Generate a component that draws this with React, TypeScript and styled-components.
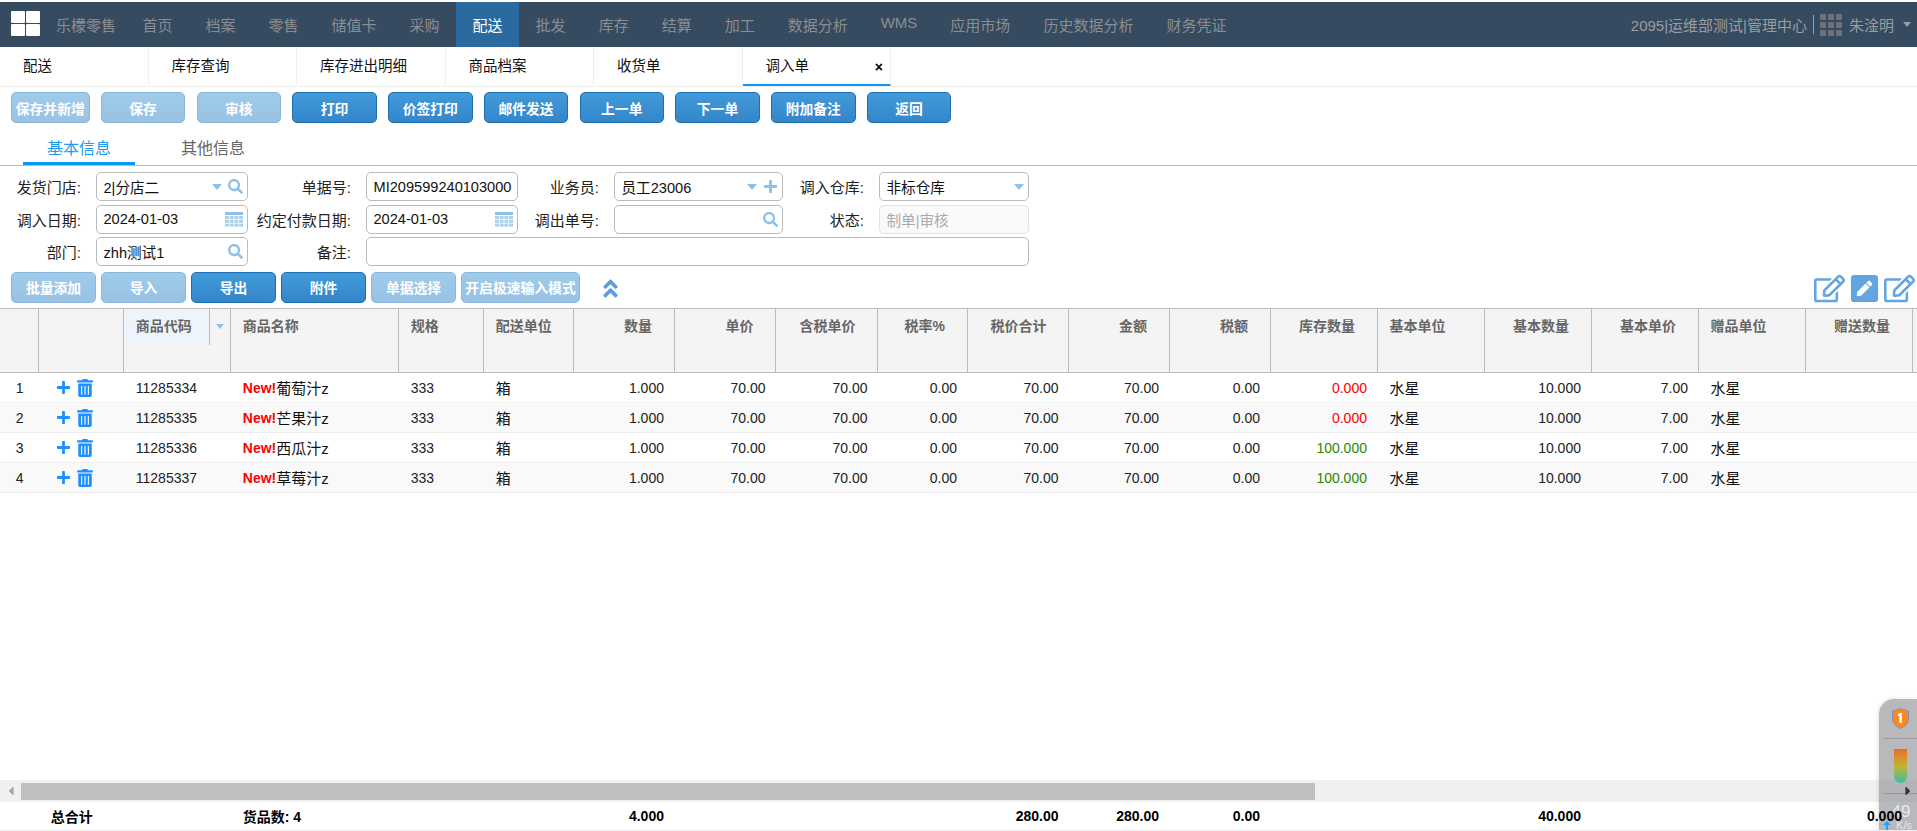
import React from 'react';
import styled, { createGlobalStyle } from 'styled-components';
import { FaSearch, FaPlus, FaTrashAlt, FaRegEdit, FaPenSquare, FaAngleDoubleUp, FaCaretLeft, FaCaretRight } from 'react-icons/fa';

const Global = createGlobalStyle`
  html, body { margin: 0; padding: 0; background: #fff; overflow: hidden; }
  body { font-family: "Liberation Sans", "Noto Sans CJK SC", sans-serif; font-size: 14px; color: #222; }
`;

const COLUMNS = '39.3px 85px 107px 168px 85px 90.2px 100.5px 101.5px 102px 89.5px 101.5px 100.5px 101px 107px 107px 107px 107px 107px 107px 60px';

const Page = styled.div`
  position: relative;
  height: 831px;
  width: 1917px;
  overflow: hidden;
  display: flex;
  flex-direction: column;
`;

const TopNav = styled.nav`
  margin-top: 2px;
  height: 45px;
  flex: none;
  background: #364a60;
  display: flex;
  align-items: stretch;
  color: #8b8e91;
  font-size: 15px;
`;
const Logo = styled.div`
  margin: 9px 16px 0 11px;
  width: 29px;
  height: 25px;
  display: grid;
  grid-template-columns: 1fr 1fr;
  grid-template-rows: 1fr 1fr;
  gap: 1px;
  span { background: #fff; border-radius: 1px; }
`;
const Brand = styled.div`
  display: flex;
  align-items: center;
  margin-right: 10px;
  white-space: nowrap;
`;
const NavItem = styled.div<{ $active?: boolean; $raised?: boolean }>`
  display: flex;
  align-items: center;
  padding: 0 16.5px ${p => (p.$raised ? '4px' : '0')};
  white-space: nowrap;
  background: ${p => (p.$active ? '#2a6a9e' : 'transparent')};
  color: ${p => (p.$active ? '#fff' : 'inherit')};
`;
const NavRight = styled.div`
  margin-left: auto;
  display: flex;
  align-items: center;
  font-size: 15px;
  color: #9a9da0;
  white-space: nowrap;
  padding-right: 6px;
`;
const Divider = styled.span`
  width: 1px;
  height: 19px;
  background: #9a9da0;
  margin: 0 6px;
`;
const UserName = styled.span`
  margin: 0 9px 0 7px;
`;
const Caret = styled.span<{ $color?: string; $w?: number }>`
  flex: none;
  width: 0;
  height: 0;
  border-left: ${p => (p.$w ?? 10) / 2}px solid transparent;
  border-right: ${p => (p.$w ?? 10) / 2}px solid transparent;
  border-top: ${p => (p.$w ?? 10) * 0.65}px solid ${p => p.$color ?? '#8fc0e8'};
`;

const TabBar = styled.div`
  height: 39px;
  flex: none;
  display: flex;
  border-bottom: 1px solid #eee;
`;
const Tab = styled.div<{ $active?: boolean }>`
  width: 148.5px;
  box-sizing: border-box;
  display: flex;
  align-items: center;
  justify-content: space-between;
  padding: 0 7px 2px 23px;
  font-size: 14.5px;
  color: #111;
  border-right: 1px solid #eee;
  border-bottom: 2px solid ${p => (p.$active ? '#0a97f5' : 'transparent')};
`;
const Close = styled.span`
  font-weight: bold;
  font-size: 14px;
  color: #000;
  margin-top: 5px;
`;

const Toolbar = styled.div<{ $gap: number; $top: number }>`
  flex: none;
  display: flex;
  align-items: center;
  gap: ${p => p.$gap}px;
  padding: ${p => p.$top}px 2px 0 11px;
`;
const Btn = styled.button<{ $w?: number; $off?: boolean }>`
  flex: none;
  box-sizing: border-box;
  width: ${p => p.$w ?? 84.5}px;
  height: 31px;
  padding: 0;
  border: 1px solid #1b6fae;
  border-radius: 5px;
  background: linear-gradient(#409ad9, #3586ca);
  color: #fff;
  font: bold 13.8px "Liberation Sans", "Noto Sans CJK SC", sans-serif;
  white-space: nowrap;
  opacity: ${p => (p.$off ? 0.5 : 1)};
`;

const SubTabs = styled.div`
  flex: none;
  height: 42px;
  display: flex;
  gap: 22px;
  padding-left: 23px;
  border-bottom: 1px solid #bbb;
`;
const SubTab = styled.div<{ $active?: boolean }>`
  width: 112px;
  box-sizing: border-box;
  display: flex;
  justify-content: center;
  align-items: center;
  padding-top: 8px;
  font-size: 16px;
  color: ${p => (p.$active ? '#1f9bf0' : '#666')};
  border-bottom: 3px solid ${p => (p.$active ? '#0a97f5' : 'transparent')};
`;

const Form = styled.div`
  flex: none;
  margin-top: 6px;
  display: grid;
  grid-template-columns: 81px 152.5px 88.5px 152px 67px 169px 67px 150px;
  grid-auto-rows: 29px;
  column-gap: 14.5px;
  row-gap: 3.5px;
  font-size: 15px;
`;
const Label = styled.label`
  display: flex;
  justify-content: flex-end;
  align-items: center;
  white-space: nowrap;
  color: #222;
`;
const Field = styled.div<{ $disabled?: boolean; $span?: boolean }>`
  box-sizing: border-box;
  display: flex;
  align-items: center;
  gap: 6px;
  padding: 0 4px 0 7px;
  border: 1px solid ${p => (p.$disabled ? '#e2e2e2' : '#bbb')};
  border-radius: 5px;
  overflow: hidden;
  white-space: nowrap;
  font-size: 14.6px;
  background: ${p => (p.$disabled ? '#fafafa' : '#fff')};
  color: ${p => (p.$disabled ? '#aaa' : '#111')};
  grid-column: ${p => (p.$span ? '4 / -1' : 'auto')};
`;
const FieldValue = styled.span`
  flex: 1;
  min-width: 0;
  overflow: hidden;
`;
const Tint = styled.span`
  display: flex;
  color: #8fc0e8;
  font-size: 15px;
`;

const Chevrons = styled.span`
  display: flex;
  margin: 2px 0 0 14px;
  color: #5b9ddf;
  font-size: 23px;
`;
const EditIcons = styled.div`
  margin: 2px 0 0 auto;
  display: flex;
  align-items: center;
  gap: 4px;
  color: #62a5e2;
  font-size: 31px;
`;

const Table = styled.div`
  flex: 1;
  min-height: 0;
  margin-top: 4.5px;
  display: flex;
  flex-direction: column;
  overflow: hidden;
`;
const Grid = styled.div`
  display: grid;
  grid-template-columns: ${COLUMNS};
  width: max-content;
`;
const HeadRow = styled(Grid)`
  flex: none;
  height: 65px;
  box-sizing: border-box;
  background: #f4f4f4;
  border-top: 1px solid #bbb;
  border-bottom: 1px solid #bbb;
`;
const HeadCell = styled.div<{ $right?: boolean }>`
  box-sizing: border-box;
  border-right: 1px solid #bbb;
  padding: 7px ${p => (p.$right ? '22px' : '0')} 0 ${p => (p.$right ? '0' : '11.5px')};
  text-align: ${p => (p.$right ? 'right' : 'left')};
  font-weight: bold;
  color: #666;
  line-height: 20px;
  white-space: nowrap;
`;
const SortCell = styled.div`
  border-right: 1px solid #bbb;
  display: flex;
  align-items: flex-start;
`;
const SortLabel = styled.div`
  box-sizing: border-box;
  width: 86px;
  height: 36px;
  flex: none;
  padding: 7px 0 0 11.5px;
  line-height: 20px;
  background: #eef4fb;
  border-right: 1px solid #bbb;
  font-weight: bold;
  color: #666;
  white-space: nowrap;
`;
const SortCaret = styled.span`
  margin: 15px 0 0 6px;
  display: flex;
`;
const Body = styled.div`
  flex: 1;
  min-height: 0;
`;
const DataRow = styled(Grid)<{ $alt: boolean }>`
  height: 30px;
  box-sizing: border-box;
  background: ${p => (p.$alt ? '#f9f9f9' : '#fff')};
  border-bottom: 1px solid #eee;
`;
const Cell = styled.div<{ $align?: string; $color?: string }>`
  display: flex;
  align-items: center;
  justify-content: ${p => (p.$align === 'right' ? 'flex-end' : p.$align === 'center' ? 'center' : 'flex-start')};
  padding: ${p => (p.$align === 'right' ? '0 11px 0 0' : p.$align === 'center' ? '0' : '0 0 0 11.5px')};
  color: ${p => p.$color ?? '#222'};
  white-space: nowrap;
`;
const Han = styled.span`
  font-size: 15px;
  color: #111;
  margin-top: -1px;
`;
const NewTag = styled.b`
  color: #f00;
`;
const Actions = styled.div`
  display: flex;
  align-items: center;
  gap: 5px;
  padding-left: 16.5px;
  color: #1e8fff;
  font-size: 15px;
  svg:last-child { font-size: 18px; }
`;

const ScrollBar = styled.div`
  flex: none;
  height: 22px;
  background: #f0f0f0;
  display: flex;
  align-items: center;
  color: #a5a5a5;
  font-size: 14px;
`;
const ScrollLeft = styled.span`
  width: 21px;
  flex: none;
  display: flex;
  justify-content: center;
`;
const Thumb = styled.div`
  width: 1294px;
  height: 17px;
  background: #c0c0c0;
`;
const ScrollRight = styled.span`
  margin-left: auto;
  margin-right: 2px;
  display: flex;
  color: #333;
  position: relative;
  z-index: 3;
`;
const Totals = styled(Grid)`
  flex: none;
  height: 29px;
  box-sizing: border-box;
  border-bottom: 1px solid #eee;
  font-weight: bold;
  position: relative;
  z-index: 3;
`;
const TotalCell = styled(Cell)`
  color: #000;
`;

const Widget = styled.div`
  position: absolute;
  right: 0;
  bottom: 0;
  width: 38px;
  height: 132px;
  box-sizing: border-box;
  border-top-left-radius: 15px;
  background: rgba(150, 152, 158, 0.68);
  box-shadow: -1px 0 4px rgba(0, 0, 0, 0.12);
  z-index: 2;
  display: flex;
  flex-direction: column;
  align-items: center;
`;
const WidgetPart = styled.div<{ $h: number }>`
  height: ${p => p.$h}px;
  flex: none;
  width: 34px;
  margin-left: 4px;
  display: flex;
  align-items: center;
  justify-content: center;
  border-bottom: 1px solid rgba(120, 120, 125, 0.45);
  box-sizing: border-box;
`;
const Speed = styled.div`
  margin-left: 4px;
  width: 34px;
  display: flex;
  flex-direction: column;
  align-items: center;
  color: #e8e8ea;
`;
const SpeedNum = styled.span`
  font-size: 17px;
  line-height: 16px;
  margin-top: 10px;
  padding-left: 2px;
`;
const SpeedUnit = styled.span`
  display: flex;
  align-items: center;
  gap: 5px;
  font-size: 11px;
  line-height: 10px;
  margin-left: -5px;
`;

const CalendarIcon = () => (
  <svg width="18" height="15" viewBox="0 0 18 15">
    <rect width="18" height="3" fill="#8fc0e8" />
    {[0, 1, 2].map(r =>
      [0, 1, 2, 3].map(c => <rect key={`${r}${c}`} x={c * 4.7} y={4 + r * 3.8} width="3.9" height="3" fill="#a9d0ee" />)
    )}
  </svg>
);

const GridIcon = () => (
  <svg width="22" height="22" viewBox="0 0 22 22">
    {[0, 1, 2].map(r =>
      [0, 1, 2].map(c => <rect key={`${r}${c}`} x={c * 8} y={r * 8} width="6" height="6" rx="1" fill="#6f7276" />)
    )}
  </svg>
);

const Shield = () => (
  <svg width="17" height="21" viewBox="0 0 17 21">
    <path d="M8.5 0.5 L16.5 3 V11 C16.5 15.5 12.5 18.5 8.5 20.5 C4.5 18.5 0.5 15.5 0.5 11 V3 Z" fill="#f78a1d" stroke="#8c8cc0" />
    <path d="M9.8 5 H7.6 L5.8 6.6 V8.6 L7.4 7.7 V15 H9.8 Z" fill="#fff" />
  </svg>
);

const Tube = () => (
  <svg width="13" height="34" viewBox="0 0 13 34">
    <defs>
      <linearGradient id="tube" x1="0" y1="0" x2="0" y2="1">
        <stop offset="0" stopColor="#ee6a2c" />
        <stop offset="0.5" stopColor="#c2b431" />
        <stop offset="1" stopColor="#35c0a8" />
      </linearGradient>
    </defs>
    <path d="M0 0 H13 V27.5 A6.5 6.5 0 0 1 0 27.5 Z" fill="url(#tube)" />
  </svg>
);

const UpArrow = () => (
  <svg width="8" height="9" viewBox="0 0 8 9">
    <path d="M4 0 L8 4 H5 V9 H3 V4 H0 Z" fill="#1ea5ff" />
  </svg>
);

const navItems = ['首页', '档案', '零售', '储值卡', '采购', '配送', '批发', '库存', '结算', '加工', '数据分析', 'WMS', '应用市场', '历史数据分析', '财务凭证'];
const tabs = ['配送', '库存查询', '库存进出明细', '商品档案', '收货单', '调入单'];
const topButtons: { label: string; off?: boolean; w?: number }[] = [
  { label: '保存并新增', off: true, w: 78.5 },
  { label: '保存', off: true },
  { label: '审核', off: true },
  { label: '打印' },
  { label: '价签打印' },
  { label: '邮件发送' },
  { label: '上一单' },
  { label: '下一单' },
  { label: '附加备注' },
  { label: '返回' },
];
const lowButtons: { label: string; off?: boolean; w: number }[] = [
  { label: '批量添加', off: true, w: 85 },
  { label: '导入', off: true, w: 85 },
  { label: '导出', w: 85 },
  { label: '附件', w: 85 },
  { label: '单据选择', off: true, w: 85 },
  { label: '开启极速输入模式', off: true, w: 119 },
];

const headAfter: { label: string; right?: boolean }[] = [
  { label: '商品名称' },
  { label: '规格' },
  { label: '配送单位' },
  { label: '数量', right: true },
  { label: '单价', right: true },
  { label: '含税单价', right: true },
  { label: '税率%', right: true },
  { label: '税价合计', right: true },
  { label: '金额', right: true },
  { label: '税额', right: true },
  { label: '库存数量', right: true },
  { label: '基本单位' },
  { label: '基本数量', right: true },
  { label: '基本单价', right: true },
  { label: '赠品单位' },
  { label: '赠送数量', right: true },
  { label: '' },
];

const rows = [
  { code: '11285334', name: '葡萄汁z', stock: '0.000', color: '#f00' },
  { code: '11285335', name: '芒果汁z', stock: '0.000', color: '#f00' },
  { code: '11285336', name: '西瓜汁z', stock: '100.000', color: '#2a8a00' },
  { code: '11285337', name: '草莓汁z', stock: '100.000', color: '#2a8a00' },
];

const totals: { label: string; left?: boolean }[] = [
  { label: '' },
  { label: '总合计', left: true },
  { label: '' },
  { label: '货品数: 4', left: true },
  { label: '' },
  { label: '' },
  { label: '4.000' },
  { label: '' },
  { label: '' },
  { label: '' },
  { label: '280.00' },
  { label: '280.00' },
  { label: '0.00' },
  { label: '' },
  { label: '' },
  { label: '40.000' },
  { label: '' },
  { label: '' },
  { label: '0.000' },
  { label: '' },
];

export default function App() {
  return (
    <Page>
      <Global />
      <TopNav>
        <Logo><span /><span /><span /><span /></Logo>
        <Brand>乐檬零售</Brand>
        {navItems.map(n => (
          <NavItem key={n} $active={n === '配送'} $raised={n === 'WMS'}>{n}</NavItem>
        ))}
        <NavRight>
          2095|运维部测试|管理中心
          <Divider />
          <GridIcon />
          <UserName>朱淦明</UserName>
          <Caret $color="#9a9da0" $w={9} />
        </NavRight>
      </TopNav>

      <TabBar>
        {tabs.map(t => (
          <Tab key={t} $active={t === '调入单'}>
            {t}
            {t === '调入单' && <Close>×</Close>}
          </Tab>
        ))}
      </TabBar>

      <Toolbar $gap={11.25} $top={5}>
        {topButtons.map(b => (
          <Btn key={b.label} $off={b.off} $w={b.w}>{b.label}</Btn>
        ))}
      </Toolbar>

      <SubTabs>
        <SubTab $active>基本信息</SubTab>
        <SubTab>其他信息</SubTab>
      </SubTabs>

      <Form>
        <Label>发货门店:</Label>
        <Field>
          <FieldValue>2|分店二</FieldValue>
          <Caret />
          <Tint><FaSearch /></Tint>
        </Field>
        <Label>单据号:</Label>
        <Field><FieldValue>MI209599240103000</FieldValue></Field>
        <Label>业务员:</Label>
        <Field>
          <FieldValue>员工23006</FieldValue>
          <Caret />
          <Tint><FaPlus /></Tint>
        </Field>
        <Label>调入仓库:</Label>
        <Field>
          <FieldValue>非标仓库</FieldValue>
          <Caret />
        </Field>

        <Label>调入日期:</Label>
        <Field>
          <FieldValue>2024-01-03</FieldValue>
          <CalendarIcon />
        </Field>
        <Label>约定付款日期:</Label>
        <Field>
          <FieldValue>2024-01-03</FieldValue>
          <CalendarIcon />
        </Field>
        <Label>调出单号:</Label>
        <Field>
          <FieldValue />
          <Tint><FaSearch /></Tint>
        </Field>
        <Label>状态:</Label>
        <Field $disabled><FieldValue>制单|审核</FieldValue></Field>

        <Label>部门:</Label>
        <Field>
          <FieldValue>zhh测试1</FieldValue>
          <Tint><FaSearch /></Tint>
        </Field>
        <Label>备注:</Label>
        <Field $span />
      </Form>

      <Toolbar $gap={5} $top={4.5}>
        {lowButtons.map(b => (
          <Btn key={b.label} $off={b.off} $w={b.w}>{b.label}</Btn>
        ))}
        <Chevrons><FaAngleDoubleUp /></Chevrons>
        <EditIcons>
          <FaRegEdit />
          <FaPenSquare />
          <FaRegEdit />
        </EditIcons>
      </Toolbar>

      <Table>
        <HeadRow>
          <HeadCell />
          <HeadCell />
          <SortCell>
            <SortLabel>商品代码</SortLabel>
            <SortCaret><Caret $w={9} /></SortCaret>
          </SortCell>
          {headAfter.map((h, i) => (
            <HeadCell key={i} $right={h.right}>{h.label}</HeadCell>
          ))}
        </HeadRow>
        <Body>
          {rows.map((r, i) => (
            <DataRow key={r.code} $alt={i % 2 === 1}>
              <Cell $align="center">{i + 1}</Cell>
              <Actions><FaPlus /><FaTrashAlt /></Actions>
              <Cell>{r.code}</Cell>
              <Cell><NewTag>New!</NewTag><Han>{r.name}</Han></Cell>
              <Cell>333</Cell>
              <Cell><Han>箱</Han></Cell>
              <Cell $align="right">1.000</Cell>
              <Cell $align="right">70.00</Cell>
              <Cell $align="right">70.00</Cell>
              <Cell $align="right">0.00</Cell>
              <Cell $align="right">70.00</Cell>
              <Cell $align="right">70.00</Cell>
              <Cell $align="right">0.00</Cell>
              <Cell $align="right" $color={r.color}>{r.stock}</Cell>
              <Cell><Han>水星</Han></Cell>
              <Cell $align="right">10.000</Cell>
              <Cell $align="right">7.00</Cell>
              <Cell><Han>水星</Han></Cell>
              <Cell />
              <Cell />
            </DataRow>
          ))}
        </Body>
        <ScrollBar>
          <ScrollLeft><FaCaretLeft /></ScrollLeft>
          <Thumb />
          <ScrollRight><FaCaretRight /></ScrollRight>
        </ScrollBar>
        <Totals>
          {totals.map((t, i) => (
            <TotalCell key={i} $align={t.left ? undefined : 'right'}>{t.label}</TotalCell>
          ))}
        </Totals>
      </Table>

      <Widget>
        <WidgetPart $h={40}><Shield /></WidgetPart>
        <WidgetPart $h={55}><Tube /></WidgetPart>
        <Speed>
          <SpeedNum>49</SpeedNum>
          <SpeedUnit><UpArrow />K/s</SpeedUnit>
        </Speed>
      </Widget>
    </Page>
  );
}
